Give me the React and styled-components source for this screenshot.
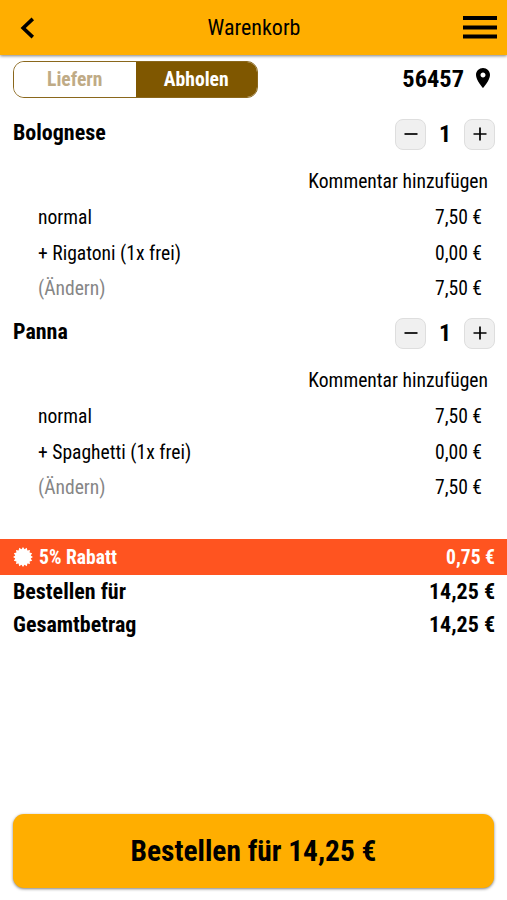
import React from "react";
import styled, { createGlobalStyle } from "styled-components";

const GlobalStyle = createGlobalStyle`
  * {
    box-sizing: border-box;
  }

  body {
    margin: 0;
    background-color: #fff;
    color: #000;
    font-family: "Roboto Condensed", Roboto, sans-serif;
    font-stretch: 75%;
    font-size: 19.6px;
  }

  button {
    padding: 0;
    border: none;
    background: none;
    color: inherit;
    font: inherit;
  }
`;

const PageWrapper = styled.div`
  height: 900px;
  display: flex;
  flex-direction: column;
`;

const Header = styled.header`
  height: 55px;
  flex-shrink: 0;
  display: grid;
  grid-template-columns: 1fr auto 1fr;
  align-items: center;
  padding: 0 10px 0 20px;
  background-color: #ffae00;
  box-shadow: 0 1px 3px rgba(0, 0, 0, 0.5);
`;

const HeaderTitle = styled.h1`
  margin: 0 9px 0 0;
  font-size: 22px;
  font-weight: 400;
`;

const IconButton = styled.button`
  display: flex;
  justify-self: ${props => props.side};
`;

const OrderBar = styled.div`
  height: 49px;
  flex-shrink: 0;
  display: flex;
  justify-content: space-between;
  align-items: center;
  padding: 0 12px 1px 13px;
`;

const Toggle = styled.div`
  width: 245px;
  height: 37px;
  display: flex;
  border: 1px solid #8a671c;
  border-radius: 11px;
  overflow: hidden;
`;

const ToggleOption = styled.button`
  flex: 1;
  font-weight: 700;
  color: ${props => (props.selected ? "#fff" : "#bfab86")};
  background-color: ${props => (props.selected ? "#7f5700" : "#fff")};
`;

const Postcode = styled.div`
  display: flex;
  align-items: center;
  gap: 7px;
  padding-bottom: 2px;
  font-size: 24.4px;
  font-weight: 700;
`;

const Product = styled.section`
  height: 199px;
  flex-shrink: 0;
`;

const ProductHead = styled.div`
  height: 60px;
  display: flex;
  justify-content: space-between;
  align-items: center;
  padding: 0 12px 0 13px;
`;

const ProductName = styled.h2`
  margin: 0 0 4px;
  font-size: 22px;
  font-weight: 700;
`;

const Stepper = styled.div`
  display: flex;
  align-items: center;
`;

const StepButton = styled.button`
  width: 31px;
  height: 31px;
  display: flex;
  justify-content: center;
  align-items: center;
  border: 1px solid #dedede;
  border-radius: 8px;
  background-color: #f0f0f0;
`;

const Count = styled.span`
  width: 38px;
  text-align: center;
  font-size: 24px;
  font-weight: 700;
`;

const Comment = styled.div`
  height: 36px;
  line-height: 36px;
  padding-right: 19px;
  text-align: right;
`;

const OptionRow = styled.div`
  height: 35.5px;
  display: flex;
  justify-content: space-between;
  align-items: center;
  padding: 0 25px 0 38px;
`;

const Change = styled.span`
  color: #868686;
`;

const Discount = styled.div`
  height: 36px;
  flex-shrink: 0;
  display: flex;
  align-items: center;
  margin-top: 36.5px;
  padding: 1px 12px 0 13px;
  font-weight: 700;
  color: #fff;
  background-color: #ff5420;
`;

const DiscountLabel = styled.span`
  flex: 1;
  margin-left: 6px;
`;

const TotalRow = styled.div`
  height: 33px;
  flex-shrink: 0;
  display: flex;
  justify-content: space-between;
  align-items: center;
  padding: 0 12px 0 13px;
  font-size: 22px;
  font-weight: 700;
`;

const OrderButton = styled.button`
  && {
    height: 74px;
    flex-shrink: 0;
    margin: auto 13px 12px;
    border-radius: 11px;
    font-size: 29.4px;
    font-weight: 700;
    background-color: #ffae00;
    box-shadow: 0 1px 3px rgba(0, 0, 0, 0.5);
  }
`;

const products = [
  { name: "Bolognese", extra: "+ Rigatoni (1x frei)" },
  { name: "Panna", extra: "+ Spaghetti (1x frei)" }
];

const starPoints = Array.from({ length: 32 }, (_, i) => {
  const radius = i % 2 ? 8.3 : 10.4;
  const angle = (i * Math.PI) / 16;
  return `${10 + radius * Math.sin(angle)},${10 - radius * Math.cos(angle)}`;
}).join(" ");

const BackIcon = () => (
  <svg width="15" height="22" viewBox="0 0 15 22" fill="none">
    <path d="M12.8 1.9L3.2 11L12.8 20.1" stroke="#000" strokeWidth="3.6" />
  </svg>
);

const MenuIcon = () => (
  <svg width="34" height="23" viewBox="0 0 34 23">
    <path d="M0 0H34V4H0ZM0 9.5H34V13.5H0ZM0 18.5H34V22.5H0Z" />
  </svg>
);

const PinIcon = () => (
  <svg width="24" height="24" viewBox="0 0 24 24">
    <path d="M12 2C8.13 2 5 5.13 5 9c0 5.25 7 13 7 13s7-7.75 7-13c0-3.87-3.13-7-7-7zm0 9.5c-1.38 0-2.5-1.12-2.5-2.5s1.12-2.5 2.5-2.5 2.5 1.12 2.5 2.5-1.12 2.5-2.5 2.5z" />
  </svg>
);

const StepIcon = ({ plus }) => (
  <svg width="14" height="14" viewBox="0 0 14 14" stroke="#000" strokeWidth="1.7">
    <path d={plus ? "M0.5 7H13.5M7 0.5V13.5" : "M0.5 7H13.5"} />
  </svg>
);

const CartProduct = ({ name, extra }) => (
  <Product>
    <ProductHead>
      <ProductName>{name}</ProductName>
      <Stepper>
        <StepButton aria-label="minus">
          <StepIcon />
        </StepButton>
        <Count>1</Count>
        <StepButton aria-label="plus">
          <StepIcon plus />
        </StepButton>
      </Stepper>
    </ProductHead>
    <Comment>Kommentar hinzufügen</Comment>
    <OptionRow>
      <span>normal</span>
      <span>7,50 €</span>
    </OptionRow>
    <OptionRow>
      <span>{extra}</span>
      <span>0,00 €</span>
    </OptionRow>
    <OptionRow>
      <Change>(Ändern)</Change>
      <span>7,50 €</span>
    </OptionRow>
  </Product>
);

const App = () => (
  <>
    <GlobalStyle />
    <PageWrapper>
      <Header>
        <IconButton side="start">
          <BackIcon />
        </IconButton>
        <HeaderTitle>Warenkorb</HeaderTitle>
        <IconButton side="end">
          <MenuIcon />
        </IconButton>
      </Header>
      <OrderBar>
        <Toggle>
          <ToggleOption>Liefern</ToggleOption>
          <ToggleOption selected>Abholen</ToggleOption>
        </Toggle>
        <Postcode>
          56457
          <PinIcon />
        </Postcode>
      </OrderBar>
      {products.map(product => (
        <CartProduct key={product.name} {...product} />
      ))}
      <Discount>
        <svg width="20" height="20" viewBox="-0.5 -0.5 21 21" fill="#fff">
          <polygon points={starPoints} />
        </svg>
        <DiscountLabel>5% Rabatt</DiscountLabel>
        <span>0,75 €</span>
      </Discount>
      <TotalRow>
        <span>Bestellen für</span>
        <span>14,25 €</span>
      </TotalRow>
      <TotalRow>
        <span>Gesamtbetrag</span>
        <span>14,25 €</span>
      </TotalRow>
      <OrderButton>Bestellen für 14,25 €</OrderButton>
    </PageWrapper>
  </>
);

export default App;
